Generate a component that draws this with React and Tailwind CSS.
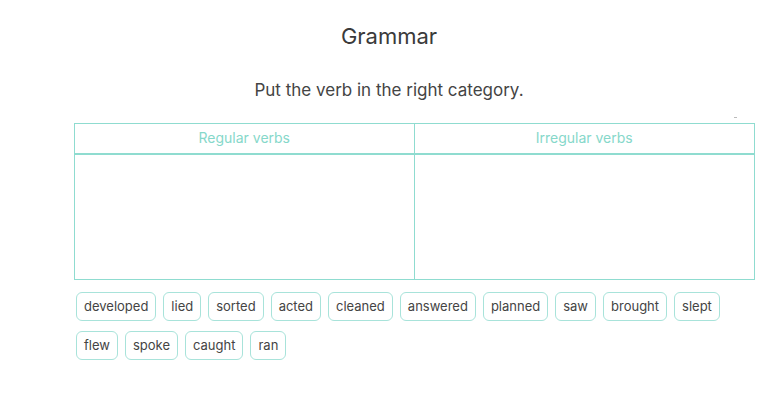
import React from "react";

const words1 = ["developed","lied","sorted","acted","cleaned","answered","planned","saw","brought","slept","flew","spoke","caught","ran"];

export default function App() {
  return (
    <div className="w-[768px] h-[403px] bg-white" style={{fontFamily: "Inter, 'Noto Sans', sans-serif"}}>
      <div className="pt-[22px] pl-[10px] text-center text-[22px] leading-[28px] text-[#3a3a3a]">Grammar</div>
      <div className="mt-[28px] pl-[10px] text-center text-[17px] leading-[24px] text-[#444]">Put the verb in the right category.</div>
      <div className="relative ml-[74px] w-[681px] mt-[21px]">
        <div className="absolute right-[18px] -top-[6px] w-[3px] h-[1px] bg-[#bbb]"></div>
        <div className="border border-[#8fdcd0] grid grid-cols-2">
          <div className="h-[31px] pb-[3px] flex items-center justify-center text-[14px] text-[#86d8ca] border-r border-b-2 border-[#8fdcd0]">Regular verbs</div>
          <div className="h-[31px] pb-[3px] flex items-center justify-center text-[14px] text-[#86d8ca] border-b-2 border-[#8fdcd0]">Irregular verbs</div>
          <div className="h-[124px] border-r border-[#8fdcd0]"></div>
          <div className="h-[124px]"></div>
        </div>
        <div className="mt-[12px] ml-[2px] flex flex-wrap gap-x-[7px] gap-y-[10px]">
          {words1.map((w) => (
            <div key={w} className="h-[29px] px-[7px] flex items-center rounded-[6px] border border-[#a8e3da] text-[13px] text-[#444]">{w}</div>
          ))}
        </div>
      </div>
    </div>
  );
}
